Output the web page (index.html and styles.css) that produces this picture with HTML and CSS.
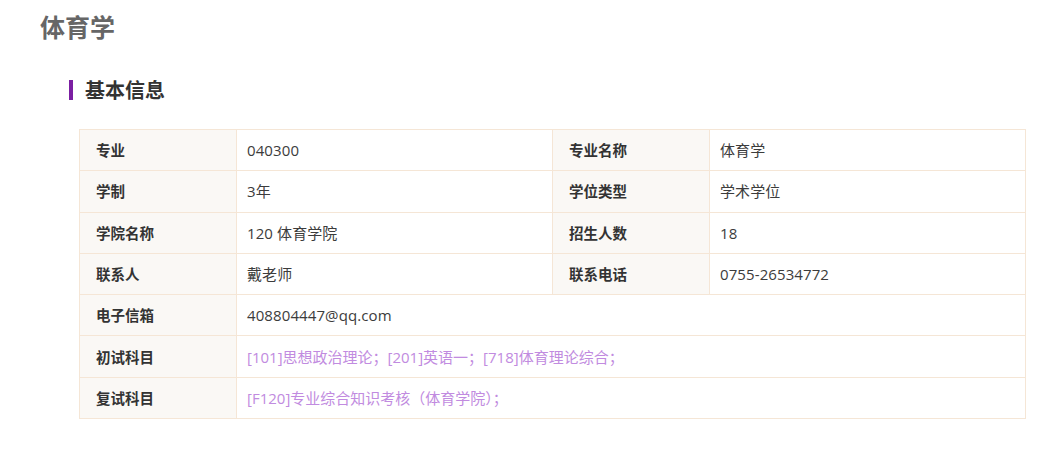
FILE: index.html
```html
<!DOCTYPE html>
<html lang="zh">
<head>
<meta charset="utf-8">
<title>体育学</title>
<link rel="stylesheet" href="styles.css">
</head>
<body>
<div class="page">
  <h1 class="title">体育学</h1>
  <section class="section">
    <h2 class="section-title">基本信息</h2>
    <table class="info">
      <colgroup>
        <col class="c-label"><col class="c-value"><col class="c-label"><col class="c-value">
      </colgroup>
      <tr><th>专业</th><td>040300</td><th>专业名称</th><td>体育学</td></tr>
      <tr><th>学制</th><td>3年</td><th>学位类型</th><td>学术学位</td></tr>
      <tr><th>学院名称</th><td>120 体育学院</td><th>招生人数</th><td>18</td></tr>
      <tr><th>联系人</th><td>戴老师</td><th>联系电话</th><td>0755-26534772</td></tr>
      <tr><th>电子信箱</th><td colspan="3">408804447@qq.com</td></tr>
      <tr><th>初试科目</th><td colspan="3" class="link">[101]思想政治理论；[201]英语一；[718]体育理论综合；</td></tr>
      <tr><th>复试科目</th><td colspan="3" class="link">[F120]专业综合知识考核（体育学院）；</td></tr>
    </table>
  </section>
</div>
</body>
</html>
```
FILE: styles.css
```css
html, body {
  margin: 0;
  padding: 0;
  background: #fff;
}
body {
  font-family: "Segoe UI", "Open Sans", "Noto Sans CJK SC", sans-serif;
  color: #333;
}
.page {
  padding: 7px 40px 0 40px;
}
.title {
  margin: 0;
  font-family: "Noto Sans CJK SC", sans-serif;
  font-size: 25px;
  line-height: 38px;
  font-weight: 700;
  color: #666;
}
.section {
  padding-left: 29px;
  margin-top: 35px;
}
.section-title {
  margin: 0;
  border-left: 4px solid #7b1fa2;
  padding-left: 12px;
  font-family: "Noto Sans CJK SC", sans-serif;
  font-size: 20px;
  line-height: 20px;
  font-weight: 700;
  color: #333;
}
.info {
  margin: 29px 0 0 10px;
  width: 946px;
  border-collapse: collapse;
  table-layout: fixed;
  font-size: 15px;
}
.c-label { width: 157px; }
.c-value { width: 316px; }
.info th, .info td {
  border: 1px solid #f5e6d6;
  height: 40.3px;
  padding: 0 0 0 10px;
  text-align: left;
  vertical-align: middle;
  line-height: 20px;
}
.info th {
  background: #faf8f5;
  font-family: "Noto Sans CJK SC", sans-serif;
  font-weight: 700;
  font-size: 14.5px;
  color: #333;
  padding-left: 16px;
}
.info td {
  color: #3c3c3c;
  letter-spacing: 0.1px;
}
.info td.link {
  color: #c18be0;
  letter-spacing: 0;
}
```
